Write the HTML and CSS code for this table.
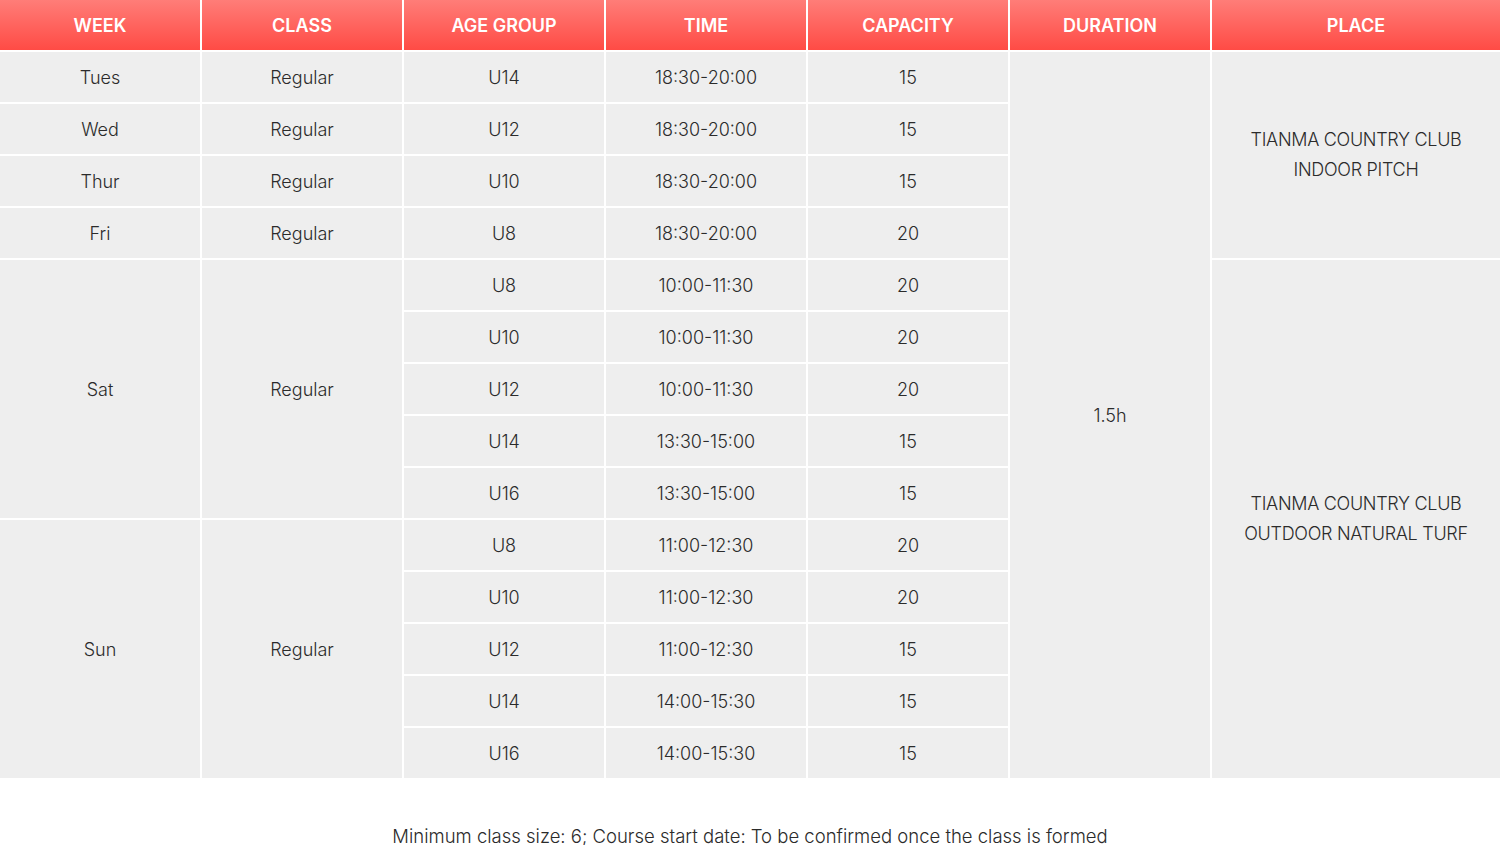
FILE: index.html
```html
<!DOCTYPE html>
<html lang="en">
<head>
<meta charset="utf-8">
<title>Schedule</title>
<link rel="stylesheet" href="styles.css">
</head>
<body>
<div class="schedule">
  <div class="hd">WEEK</div>
  <div class="hd">CLASS</div>
  <div class="hd">AGE GROUP</div>
  <div class="hd">TIME</div>
  <div class="hd">CAPACITY</div>
  <div class="hd">DURATION</div>
  <div class="hd">PLACE</div>

  <div class="c">Tues</div><div class="c">Regular</div><div class="c">U14</div><div class="c">18:30-20:00</div><div class="c">15</div>
  <div class="c duration">1.5h</div>
  <div class="c place indoor">TIANMA COUNTRY CLUB<br>INDOOR PITCH</div>

  <div class="c">Wed</div><div class="c">Regular</div><div class="c">U12</div><div class="c">18:30-20:00</div><div class="c">15</div>
  <div class="c">Thur</div><div class="c">Regular</div><div class="c">U10</div><div class="c">18:30-20:00</div><div class="c">15</div>
  <div class="c">Fri</div><div class="c">Regular</div><div class="c">U8</div><div class="c">18:30-20:00</div><div class="c">20</div>

  <div class="c span5">Sat</div><div class="c span5">Regular</div><div class="c">U8</div><div class="c">10:00-11:30</div><div class="c">20</div>
  <div class="c place outdoor">TIANMA COUNTRY CLUB<br>OUTDOOR NATURAL TURF</div>
  <div class="c">U10</div><div class="c">10:00-11:30</div><div class="c">20</div>
  <div class="c">U12</div><div class="c">10:00-11:30</div><div class="c">20</div>
  <div class="c">U14</div><div class="c">13:30-15:00</div><div class="c">15</div>
  <div class="c">U16</div><div class="c">13:30-15:00</div><div class="c">15</div>

  <div class="c span5">Sun</div><div class="c span5">Regular</div><div class="c">U8</div><div class="c">11:00-12:30</div><div class="c">20</div>
  <div class="c">U10</div><div class="c">11:00-12:30</div><div class="c">20</div>
  <div class="c">U12</div><div class="c">11:00-12:30</div><div class="c">15</div>
  <div class="c">U14</div><div class="c">14:00-15:30</div><div class="c">15</div>
  <div class="c">U16</div><div class="c">14:00-15:30</div><div class="c">15</div>
</div>
<p class="note">Minimum class size: 6; Course start date: To be confirmed once the class is formed</p>
</body>
</html>
```

FILE: styles.css
```css
html, body {
  margin: 0;
  padding: 0;
  background: #ffffff;
}
body {
  font-family: Inter, "Noto Sans", "Liberation Sans", sans-serif;
  color: #2b2b2b;
}
.schedule {
  display: grid;
  grid-template-columns: repeat(6, 200px) 288px;
  grid-auto-rows: 50px;
  gap: 2px;
  width: 1500px;
}
.hd {
  background: linear-gradient(to bottom, #ff7d78 0%, #ff4b45 100%);
  color: #ffffff;
  font-size: 18px;
  font-weight: 600;
  display: flex;
  align-items: center;
  justify-content: center;
}
.c {
  background: #eeeeee;
  font-size: 18px;
  font-weight: 300;
  display: flex;
  align-items: center;
  justify-content: center;
  text-align: center;
}
.span5 {
  grid-row: span 5;
}
.duration {
  grid-column: 6;
  grid-row: 2 / span 14;
}
.place {
  grid-column: 7;
  line-height: 30px;
  letter-spacing: -0.3px;
}
.indoor {
  grid-row: 2 / span 4;
}
.outdoor {
  grid-row: 6 / span 10;
}
.note {
  margin: 45px 0 0;
  text-align: center;
  font-size: 18.5px;
  font-weight: 300;
  line-height: 26px;
  color: #2b2b2b;
}
```
